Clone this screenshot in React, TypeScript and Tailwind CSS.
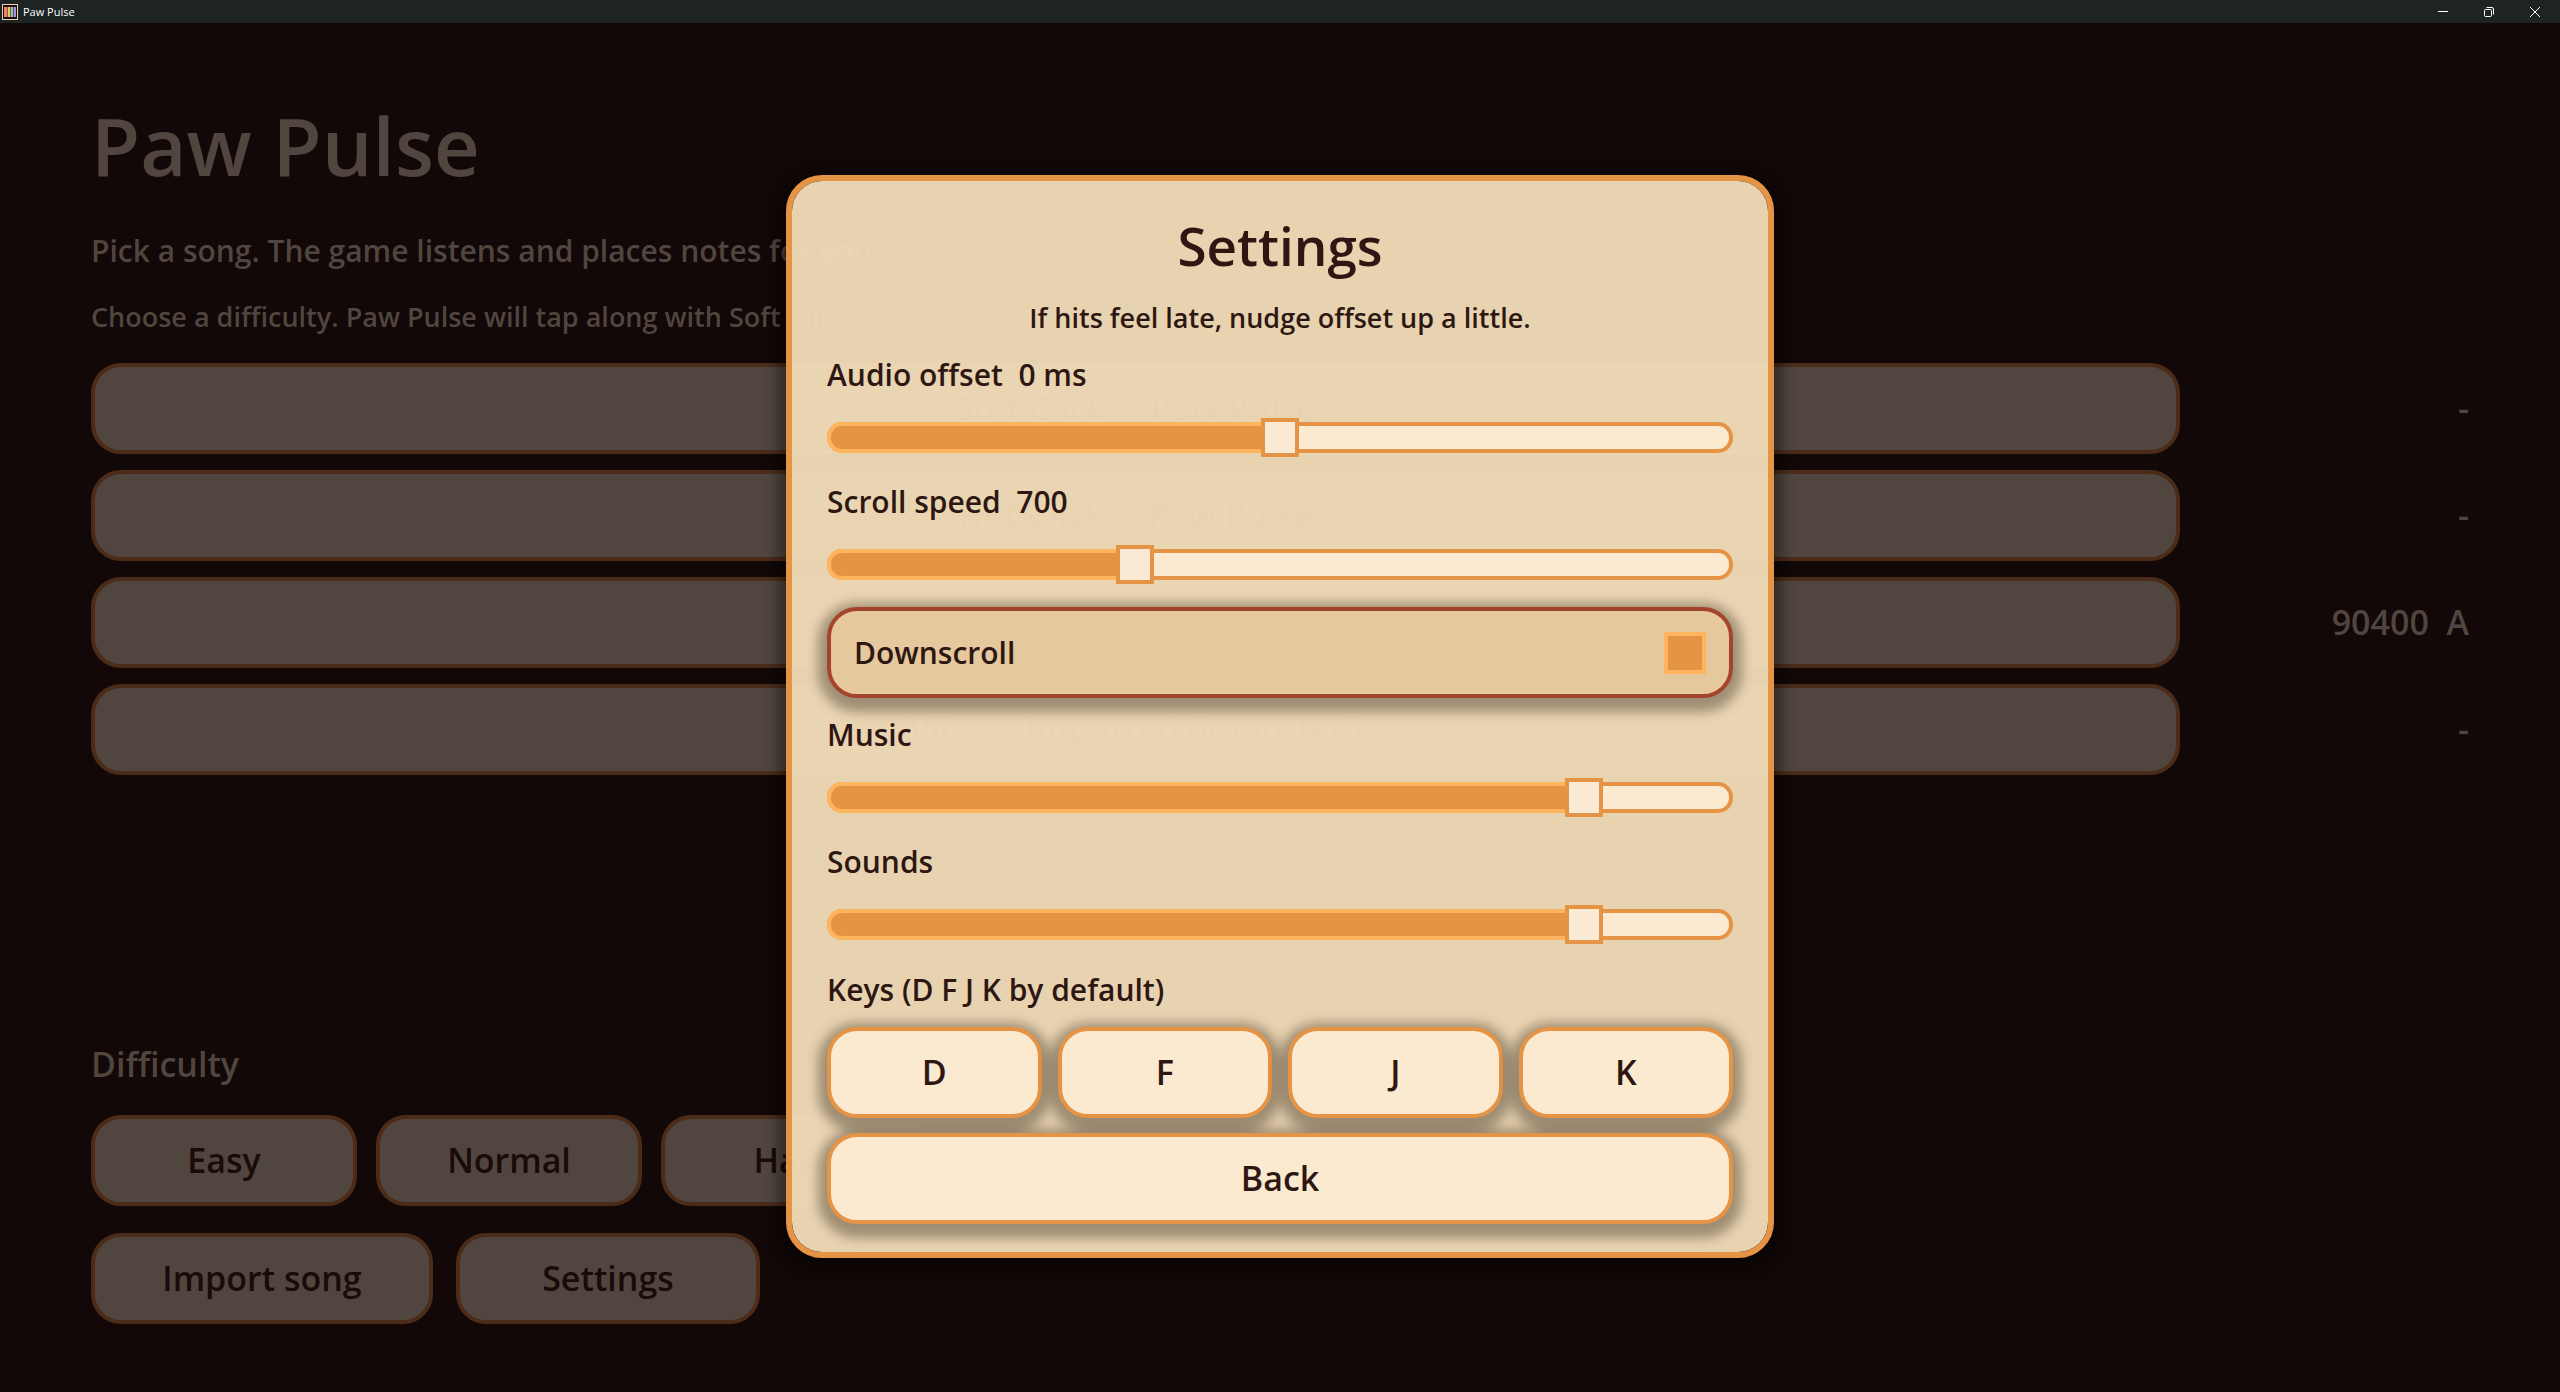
import { useState } from "react";

const songs = [
  { title: "Soft Click  ·  Paw Pulse", score: "-" },
  { title: "Hot Click  ·  Paw Pulse", score: "-" },
  { title: "", score: "90400  A" },
  { title: "Vibe  ·  Imported (imported)", score: "-" },
];

const DIM_BUTTON =
  "flex h-[91px] items-center justify-center whitespace-pre rounded-[30px] border-4 border-[#4c2c19] bg-[#50463f] text-[34px] text-[#1a0a08]";

const CREAM_BUTTON =
  "h-[91px] rounded-[30px] border-4 border-[#e59345] bg-[#fbead0] text-[34px] shadow-[0_5px_12px_9px_rgba(32,22,10,0.37)]";

function TitleBar() {
  return (
    <header className="flex h-[23px] items-center justify-between bg-[#1e2324] pl-0.5 text-white">
      <div className="flex items-center gap-[5px]">
        <svg width="16" height="16" viewBox="0 0 16 16" aria-hidden="true">
          <rect x="0.5" y="0.5" width="15" height="15" fill="#1c0d0c" stroke="#e8d3b1" />
          <rect x="2" y="3" width="3" height="10" fill="#f0816c" />
          <rect x="5" y="3" width="1" height="10" fill="#8a5a3c" />
          <rect x="6" y="3" width="2" height="10" fill="#f2c566" />
          <rect x="8" y="3" width="1" height="10" fill="#5f6a4a" />
          <rect x="9" y="3" width="2" height="10" fill="#84cfa6" />
          <rect x="11" y="3" width="1" height="10" fill="#56506e" />
          <rect x="12" y="3" width="2" height="10" fill="#b78af0" />
        </svg>
        <span className="text-[11px] leading-4 font-normal">Paw Pulse</span>
      </div>
      <div className="flex pr-0.5">
        <button type="button" aria-label="Minimize" className="flex w-[46px] justify-center">
          <svg width="10" height="10" viewBox="0 0 10 10" stroke="currentColor" fill="none">
            <path d="M0 4.5h10" />
          </svg>
        </button>
        <button type="button" aria-label="Restore" className="flex w-[46px] justify-center">
          <svg width="10" height="10" viewBox="0 0 10 10" stroke="currentColor" fill="none">
            <rect x="0.5" y="2.5" width="7" height="7" rx="1" />
            <path d="M2.5 0.5H8a1.5 1.5 0 0 1 1.5 1.5v5.5" />
          </svg>
        </button>
        <button type="button" aria-label="Close" className="flex w-[46px] justify-center">
          <svg width="10" height="10" viewBox="0 0 10 10" stroke="currentColor" fill="none">
            <path d="M0 0l10 10M10 0L0 10" />
          </svg>
        </button>
      </div>
    </header>
  );
}

type SliderProps = {
  id: string;
  label: string;
  min: number;
  max: number;
  initial: number;
  suffix?: string;
  showValue?: boolean;
};

function Slider({ id, label, min, max, initial, suffix = "", showValue = false }: SliderProps) {
  const [value, setValue] = useState(initial);
  const fraction = (value - min) / (max - min);
  return (
    <div className="flex flex-col gap-[13px]">
      <label htmlFor={id} className="text-[30px] leading-[44px] whitespace-pre">
        {showValue ? `${label}  ${value}${suffix}` : label}
      </label>
      <div className="relative flex h-[55px] items-center">
        <div className="h-[31px] w-full overflow-hidden rounded-[15px] border-4 border-[#e59345] bg-[#fbead0]" />
        <div
          className="absolute left-0 h-[31px] rounded-l-[15px] border-4 border-r-0 border-[#ffb55d] bg-[#e59345]"
          style={{ width: `${fraction * 100}%` }}
        />
        <input
          id={id}
          type="range"
          min={min}
          max={max}
          value={value}
          onChange={(e) => setValue(Number(e.target.value))}
          className="absolute inset-0 h-full w-full cursor-pointer appearance-none bg-transparent [&::-webkit-slider-thumb]:h-[39px] [&::-webkit-slider-thumb]:w-[38px] [&::-webkit-slider-thumb]:appearance-none [&::-webkit-slider-thumb]:rounded-none [&::-webkit-slider-thumb]:border-4 [&::-webkit-slider-thumb]:border-solid [&::-webkit-slider-thumb]:border-[#e59345] [&::-webkit-slider-thumb]:bg-[#fbead3]"
        />
      </div>
    </div>
  );
}

function SongMenu() {
  return (
    <main className="flex flex-1 flex-col px-[91px] pt-[68px] pb-[68px] text-[#50463f]">
      <h1 className="text-[80px] leading-[108px] font-semibold">Paw Pulse</h1>
      <p className="mt-[30px] text-[30px] leading-[44px]">
        Pick a song. The game listens and places notes for you.
      </p>
      <p className="mt-[26px] text-[27px] leading-[36px]">
        Choose a difficulty. Paw Pulse will tap along with Soft Click.
      </p>
      <ul className="mt-[28px] flex flex-col gap-[16px]">
        {songs.map((song, i) => (
          <li key={i} className="flex items-center gap-[23px]">
            <button type="button" className={`${DIM_BUTTON} flex-1`}>
              {song.title}
            </button>
            <span className="w-[266px] text-right text-[34px] whitespace-pre">{song.score}</span>
          </li>
        ))}
      </ul>
      <div className="mt-auto">
        <h2 className="text-[34px] leading-[46px]">Difficulty</h2>
        <div className="mt-[28px] flex gap-[19px]">
          {["Easy", "Normal", "Hard"].map((name) => (
            <button key={name} type="button" className={`${DIM_BUTTON} w-[266px]`}>
              {name}
            </button>
          ))}
        </div>
        <div className="mt-[27px] flex gap-[23px]">
          <button type="button" className={`${DIM_BUTTON} w-[342px]`}>
            Import song
          </button>
          <button type="button" className={`${DIM_BUTTON} w-[304px]`}>
            Settings
          </button>
        </div>
      </div>
    </main>
  );
}

function SettingsDialog() {
  const [downscroll, setDownscroll] = useState(true);
  return (
    <section
      role="dialog"
      aria-labelledby="settings-title"
      className="flex w-[988px] flex-col gap-[15px] rounded-[36px] border-6 border-[#e59345] bg-[rgba(239,218,183,0.97)] bg-clip-padding px-[35px] py-[28px] text-[#2e1712] shadow-[0_5px_14px_8px_rgba(0,0,0,0.4)]"
    >
      <h2 id="settings-title" className="text-center text-[53px] leading-[74px]">
        Settings
      </h2>
      <p className="text-center text-[27px] leading-[40px]">
        If hits feel late, nudge offset up a little.
      </p>
      <Slider id="offset" label="Audio offset" min={-200} max={200} initial={0} suffix=" ms" showValue />
      <Slider id="speed" label="Scroll speed" min={400} max={1300} initial={700} showValue />
      <label className="flex h-[91px] cursor-pointer items-center justify-between rounded-[30px] border-4 border-[#a3452c] bg-[#e5c89d] px-[23px] text-[30px] shadow-[0_5px_12px_9px_rgba(32,22,10,0.37)]">
        Downscroll
        <input
          type="checkbox"
          checked={downscroll}
          onChange={(e) => setDownscroll(e.target.checked)}
          className="size-[42px] appearance-none border-4 border-[#ffb55d] bg-[#fbead0] checked:bg-[#e59345]"
        />
      </label>
      <Slider id="music" label="Music" min={0} max={100} initial={85} />
      <Slider id="sounds" label="Sounds" min={0} max={100} initial={85} />
      <h3 className="text-[30px] leading-[45px]">Keys (D F J K by default)</h3>
      <div className="grid grid-cols-4 gap-[16px]">
        {["D", "F", "J", "K"].map((key) => (
          <button key={key} type="button" className={CREAM_BUTTON}>
            {key}
          </button>
        ))}
      </div>
      <button type="button" className={CREAM_BUTTON}>
        Back
      </button>
    </section>
  );
}

export default function App() {
  return (
    <div className="relative flex min-h-screen flex-col bg-[#110807] font-['Open_Sans',sans-serif] font-semibold">
      <TitleBar />
      <SongMenu />
      <div className="absolute inset-x-0 top-[175px] flex justify-center">
        <SettingsDialog />
      </div>
    </div>
  );
}
